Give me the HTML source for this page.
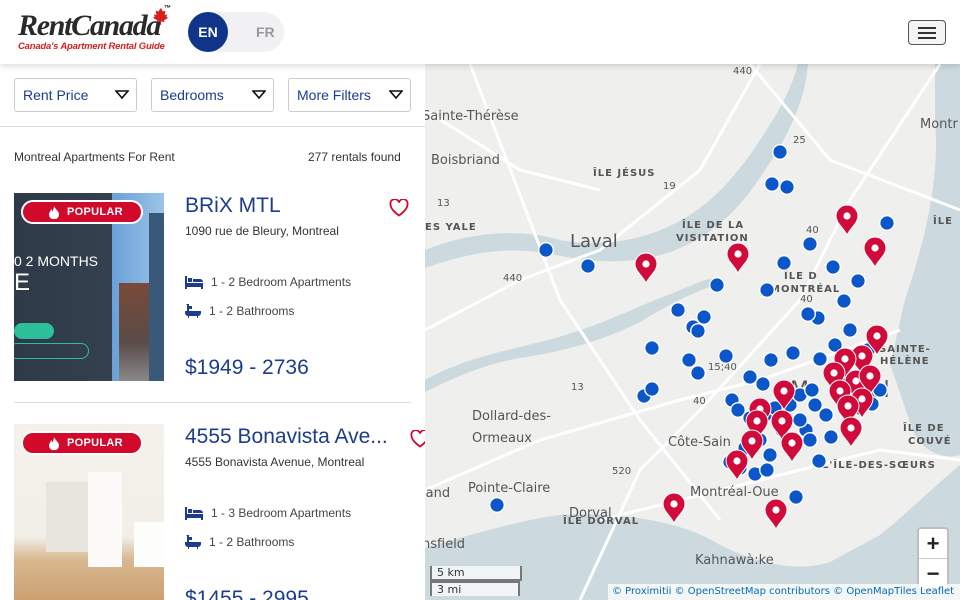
<!DOCTYPE html>
<html><head><meta charset="utf-8">
<style>
*{box-sizing:border-box;margin:0;padding:0}
html,body{width:960px;height:600px;overflow:hidden}
body{background:#fff;font-family:"Liberation Sans",sans-serif;position:relative}
.hdr{position:absolute;left:0;top:0;width:960px;height:64px;background:#fff;box-shadow:0 2px 6px rgba(0,0,0,.15);z-index:5}
.logo{position:absolute;left:18px;top:11px}
.logo .t{font-family:"Liberation Serif",serif;font-style:italic;font-weight:bold;font-size:30px;color:#2a2a2a;letter-spacing:-1.3px;line-height:30px}
.logo .s{font-style:italic;font-weight:bold;font-size:9.5px;color:#d42020;margin-top:0px;letter-spacing:-.2px}
.lang{position:absolute;left:188px;top:12px;width:96px;height:40px;border-radius:20px;background:#f1f1f3}
.lang .en{position:absolute;left:0;top:0;width:40px;height:40px;border-radius:50%;background:#0f3488;color:#fff;font-weight:bold;font-size:14px;text-align:center;line-height:40px}
.lang .fr{position:absolute;left:68px;top:0;line-height:40px;color:#999;font-weight:bold;font-size:14px}
.burger{position:absolute;left:908px;top:20px;width:38px;height:25px;border:1px solid #555;border-radius:4px;background:#f4f4f4}
.burger i{position:absolute;left:9px;width:18px;height:2px;background:#333}
.filt{position:absolute;top:78px;height:34px;border:1px solid #ccc;border-radius:3px;color:#1e3c8c;font-size:14px;line-height:33px;padding-left:8px}
.filt svg{position:absolute;right:7px;top:11px}
.line{position:absolute;left:0;top:126px;width:425px;height:1px;background:#ddd}
.cnt{position:absolute;top:150px;font-size:12px;color:#333}
.card{position:absolute;left:14px;width:411px}
.img{position:absolute;left:0;top:0;width:150px;height:188px;overflow:hidden}
.pop{position:absolute;left:7px;top:7px;width:122px;height:24px;border-radius:12px;background:#d10a2c;border:2px solid #fff;color:#fff;font-size:11px;font-weight:bold;line-height:20px;padding-left:44px;letter-spacing:.3px}
.pop svg{position:absolute;left:26px;top:4px}
.title{position:absolute;left:171px;top:1px;font-size:21px;color:#1e3c8c;white-space:nowrap}
.addr{position:absolute;left:171px;top:31px;font-size:12px;color:#333}
.feat{position:absolute;left:171px;font-size:12px;color:#444}
.feat svg{vertical-align:-3px;margin-right:8px}
.price{position:absolute;left:171px;top:163px;font-size:21px;color:#1e3c8c}
.heart{position:absolute;top:6px}
.map{position:absolute;left:425px;top:64px;width:535px;height:536px;overflow:hidden;background:#efefed}
.map text{font-family:"DejaVu Sans",sans-serif;fill:#555}
.zm{position:absolute;left:917px;top:527px;width:32px;height:64px;border:2px solid rgba(0,0,0,.25);border-radius:4px;background:#fff;z-index:3}
.zm div{height:30px;text-align:center;font-size:22px;font-weight:bold;line-height:30px;color:#222}
.attr{position:absolute;left:608px;top:584px;width:352px;height:16px;background:rgba(255,255,255,.75);font-size:10px;color:#0a6ab0;padding-left:4px;line-height:16px;white-space:nowrap;overflow:hidden;z-index:3;font-family:"DejaVu Sans",sans-serif}
.scale{position:absolute;left:430px;z-index:3;font-size:11px;color:#333;background:rgba(255,255,255,.7);font-family:"DejaVu Sans",sans-serif;padding-left:5px;line-height:13px}
</style></head><body>
<div class="hdr">
 <div class="logo"><div class="t">RentCanada</div><div class="s">Canada's Apartment Rental Guide</div>
 <svg style="position:absolute;left:134px;top:-4px" width="18" height="18" viewBox="0 0 20 20"><path d="M10 1l2 4 3-1-1 5 3-1-1 3 2 1-5 3 1 2-4-1v4h-1v-4l-4 1 1-2-5-3 2-1-1-3 3 1-1-5 3 1z" fill="#d42020"/></svg>
 <span style="position:absolute;left:146px;top:-6px;font-size:7px;font-weight:bold">™</span></div>
 <div class="lang"><div class="en">EN</div><div class="fr">FR</div></div>
 <div class="burger"><i style="top:6px"></i><i style="top:11px"></i><i style="top:16px"></i></div>
</div>
<div class="filt" style="left:14px;width:123px">Rent Price<svg width="14" height="10"><path d="M1 1h12L7 8z" fill="none" stroke="#111" stroke-width="1.6"/></svg></div>
<div class="filt" style="left:151px;width:123px">Bedrooms<svg width="14" height="10"><path d="M1 1h12L7 8z" fill="none" stroke="#111" stroke-width="1.6"/></svg></div>
<div class="filt" style="left:288px;width:123px">More Filters<svg width="14" height="10"><path d="M1 1h12L7 8z" fill="none" stroke="#111" stroke-width="1.6"/></svg></div>
<div class="line"></div>
<div class="cnt" style="left:14px">Montreal Apartments For Rent</div>
<div class="cnt" style="left:308px">277 rentals found</div>

<div class="card" style="top:193px">
 <div class="img" style="background:linear-gradient(90deg,#2e3a48 0,#34404e 98px,#6aa0d8 98px,#9cc4e8 150px)">
  <div style="position:absolute;left:105px;top:90px;width:30px;height:98px;background:linear-gradient(180deg,#7a4a38,#5a4a48 60%,#888 100%)"></div>
  <div style="position:absolute;left:135px;top:20px;width:15px;height:168px;background:#3a5878"></div>
  <div style="position:absolute;left:0;top:60px;color:#fff;font-size:14px;white-space:nowrap">0 2 MONTHS</div>
  <div style="position:absolute;left:0;top:76px;color:#fff;font-size:24px">E</div>
  <div style="position:absolute;left:0;top:130px;width:40px;height:16px;border-radius:8px;background:#2bbf9a"></div>
  <div style="position:absolute;left:-5px;top:150px;width:80px;height:16px;border-radius:8px;border:1px solid #2bbf9a"></div>
  <div class="pop"><svg width="10" height="13" viewBox="0 0 10 13"><path d="M5 0C6 3 10 5 10 8.5A5 5 0 0 1 0 8.5C0 6 2 5 2 3c1 1 1.5 2 1.5 3C4 4 5 2 5 0z" fill="#fff"/></svg>POPULAR</div>
 </div>
 <div class="title">BRiX MTL</div>
 <div class="addr">1090 rue de Bleury, Montreal</div>
 <div class="feat" style="top:82px"><svg width="18" height="13" viewBox="0 0 18 13"><path d="M0 0h2v7h16v6h-2v-2H2v2H0zM3 2h4v4H3zM8 3h7a3 3 0 0 1 3 3H8z" fill="#1e3c8c"/></svg>1 - 2 Bedroom Apartments</div>
 <div class="feat" style="top:111px"><svg width="16" height="14" viewBox="0 0 16 14"><path d="M1 0h3v2h3v3H4V7h12v2a3 3 0 0 1-3 3v2h-1v-2H4v2H3v-2A3 3 0 0 1 0 9V7h2V1z" fill="#1e3c8c"/></svg>1 - 2 Bathrooms</div>
 <div class="price">$1949 - 2736</div>
 <svg class="heart" style="left:375px" width="20" height="18" viewBox="0 0 20 18"><path d="M10 16.5S1.5 11 1.5 5.5A4 4 0 0 1 10 3.5a4 4 0 0 1 8.5 2C18.5 11 10 16.5 10 16.5z" fill="none" stroke="#d10a2c" stroke-width="1.8"/></svg>
</div>
<div style="position:absolute;left:14px;top:402px;width:397px;height:1px;background:#ddd"></div>
<div class="card" style="top:424px">
 <div class="img" style="background:linear-gradient(180deg,#f4f0ea 0,#f2eee8 60%,#d8b890 72%,#c89a68 100%)">
  <div style="position:absolute;left:32px;top:58px;width:42px;height:70px;background:#e8e4de"></div>
  <div style="position:absolute;left:74px;top:48px;width:34px;height:95px;background:#fbfaf8"></div>
  <div style="position:absolute;left:120px;top:98px;width:30px;height:45px;background:#fdfdfc"></div>
  <div class="pop"><svg width="10" height="13" viewBox="0 0 10 13"><path d="M5 0C6 3 10 5 10 8.5A5 5 0 0 1 0 8.5C0 6 2 5 2 3c1 1 1.5 2 1.5 3C4 4 5 2 5 0z" fill="#fff"/></svg>POPULAR</div>
 </div>
 <div class="title">4555 Bonavista Ave...</div>
 <div class="addr">4555 Bonavista Avenue, Montreal</div>
 <div class="feat" style="top:82px"><svg width="18" height="13" viewBox="0 0 18 13"><path d="M0 0h2v7h16v6h-2v-2H2v2H0zM3 2h4v4H3zM8 3h7a3 3 0 0 1 3 3H8z" fill="#1e3c8c"/></svg>1 - 3 Bedroom Apartments</div>
 <div class="feat" style="top:111px"><svg width="16" height="14" viewBox="0 0 16 14"><path d="M1 0h3v2h3v3H4V7h12v2a3 3 0 0 1-3 3v2h-1v-2H4v2H3v-2A3 3 0 0 1 0 9V7h2V1z" fill="#1e3c8c"/></svg>1 - 2 Bathrooms</div>
 <div class="price">$1455 - 2995</div>
 <svg class="heart" style="left:396px" width="20" height="18" viewBox="0 0 20 18"><path d="M10 16.5S1.5 11 1.5 5.5A4 4 0 0 1 10 3.5a4 4 0 0 1 8.5 2C18.5 11 10 16.5 10 16.5z" fill="none" stroke="#d10a2c" stroke-width="1.8"/></svg>
</div>

<div class="map">
<svg width="535" height="536" viewBox="425 64 535 536">
<defs>
 <g id="b"><circle r="8" fill="#fff"/><circle r="6.6" fill="#0b56c8"/></g>
 <g id="p"><path d="M0 0C-4-8-11-12-11-19a11 11 0 0 1 22 0C11-12 4-8 0 0z" fill="#d00a3a" stroke="#fff" stroke-width="1"/><circle cy="-19" r="3.6" fill="#fff"/></g>
</defs>
<!-- water -->
<path d="M425 600L425 548C470 535 520 520 560 515C620 512 680 520 720 545C760 565 800 572 830 562L880 535C905 515 930 490 960 465L960 600Z" fill="#ccdadf"/>
<path d="M935 64L960 64L960 455C945 460 925 452 915 435C905 410 898 385 890 365L905 300C925 240 940 180 935 120Z" fill="#ccdadf"/>
<path d="M425 250C470 232 520 228 560 240C600 248 640 240 670 226C700 212 725 190 752 152C772 122 790 95 798 64L808 64C805 105 785 140 765 170C740 210 710 238 670 252C630 266 590 262 550 254C510 246 470 252 425 268Z" fill="#ccdadf"/>
<path d="M425 380C460 360 500 352 540 342C590 330 630 310 660 298C690 287 700 280 715 278L712 286C690 294 670 304 640 322C600 342 560 352 520 358C480 365 450 380 425 392Z" fill="#ccdadf"/>
<!-- roads -->
<g stroke="#fff" stroke-width="3" fill="none">
<path d="M425 330L520 280L600 250L700 170L760 64"/>
<path d="M470 64L560 300L640 420L720 520"/>
<path d="M425 490L540 440L680 400L760 380L900 330"/>
<path d="M580 600L640 470L700 410L800 300L850 200L940 64"/>
<path d="M750 64L830 160L960 210"/>
<path d="M425 110L520 170L600 190"/>
<path d="M600 520L760 480L880 450L960 460"/>
</g>
<!-- labels -->
<g font-size="13">
<text x="422" y="120">Sainte-Thérèse</text>
<text x="431" y="164">Boisbriand</text>
<text x="570" y="247" font-size="18">Laval</text>
<text x="472" y="420">Dollard-des-</text>
<text x="472" y="442">Ormeaux</text>
<text x="468" y="492">Pointe-Claire</text>
<text x="422" y="497">land</text>
<text x="569" y="517">Dorval</text>
<text x="422" y="548">nsfield</text>
<text x="668" y="446">Côte-Sain</text>
<text x="690" y="496">Montréal-Oue</text>
<text x="695" y="564">Kahnawà:ke</text>
<text x="920" y="128">Montr</text>
<text x="790" y="397" font-size="22">M</text><text x="870" y="397" font-size="22">al</text>
</g>
<g font-size="10" font-weight="bold" letter-spacing="1">
<text x="593" y="176">ÎLE JÉSUS</text>
<text x="682" y="228">ÎLE DE LA</text>
<text x="676" y="241">VISITATION</text>
<text x="784" y="279">ÎLE D</text>
<text x="770" y="292">MONTRÉAL</text>
<text x="425" y="230">ES YALE</text>
<text x="563" y="524">ÎLE DORVAL</text>
<text x="822" y="468">L'ÎLE-DES-SŒURS</text>
<text x="879" y="352">SAINTE-</text><text x="880" y="364">HÉLÈNE</text>
<text x="903" y="431">ÎLE DE</text><text x="908" y="444">COUVÉ</text>
<text x="933" y="224">ÎLE</text>
</g>
<g font-size="10"><text x="733" y="74">440</text><text x="793" y="143">25</text><text x="663" y="189">19</text><text x="503" y="281">440</text><text x="437" y="206">13</text><text x="571" y="390">13</text><text x="612" y="474">520</text><text x="693" y="404">40</text><text x="708" y="370">15;40</text><text x="806" y="233">40</text><text x="800" y="302">40</text></g>
<g>
<use href="#b" x="780" y="152"/><use href="#b" x="772" y="184"/><use href="#b" x="787" y="187"/><use href="#b" x="546" y="250"/><use href="#b" x="588" y="266"/><use href="#b" x="810" y="244"/><use href="#b" x="887" y="223"/><use href="#b" x="833" y="267"/><use href="#b" x="784" y="263"/><use href="#b" x="717" y="285"/><use href="#b" x="767" y="290"/><use href="#b" x="858" y="281"/><use href="#b" x="844" y="301"/><use href="#b" x="678" y="310"/><use href="#b" x="704" y="317"/><use href="#b" x="693" y="327"/><use href="#b" x="698" y="331"/><use href="#b" x="818" y="318"/><use href="#b" x="808" y="314"/><use href="#b" x="652" y="348"/><use href="#b" x="689" y="360"/><use href="#b" x="698" y="373"/><use href="#b" x="726" y="356"/><use href="#b" x="644" y="396"/><use href="#b" x="652" y="389"/><use href="#b" x="771" y="360"/><use href="#b" x="750" y="377"/><use href="#b" x="763" y="384"/><use href="#b" x="793" y="353"/><use href="#b" x="820" y="359"/><use href="#b" x="497" y="505"/><use href="#b" x="796" y="497"/><use href="#b" x="819" y="461"/><use href="#b" x="831" y="437"/><use href="#b" x="806" y="430"/><use href="#b" x="740" y="468"/><use href="#b" x="755" y="474"/><use href="#b" x="767" y="470"/><use href="#b" x="732" y="400"/><use href="#b" x="738" y="410"/><use href="#b" x="750" y="418"/><use href="#b" x="765" y="415"/><use href="#b" x="775" y="408"/><use href="#b" x="790" y="405"/><use href="#b" x="800" y="395"/><use href="#b" x="812" y="390"/><use href="#b" x="826" y="415"/><use href="#b" x="845" y="400"/><use href="#b" x="860" y="408"/><use href="#b" x="872" y="404"/><use href="#b" x="850" y="330"/><use href="#b" x="835" y="345"/><use href="#b" x="868" y="350"/><use href="#b" x="880" y="340"/><use href="#b" x="810" y="440"/><use href="#b" x="782" y="430"/><use href="#b" x="760" y="440"/><use href="#b" x="745" y="448"/><use href="#b" x="730" y="462"/><use href="#b" x="770" y="455"/><use href="#b" x="800" y="420"/><use href="#b" x="815" y="405"/><use href="#b" x="838" y="380"/><use href="#b" x="862" y="375"/><use href="#b" x="880" y="390"/>
</g>
<g>
<use href="#p" x="646" y="283"/><use href="#p" x="738" y="273"/><use href="#p" x="847" y="235"/><use href="#p" x="875" y="267"/><use href="#p" x="877" y="355"/><use href="#p" x="862" y="375"/><use href="#p" x="845" y="378"/><use href="#p" x="834" y="392"/><use href="#p" x="856" y="400"/><use href="#p" x="870" y="395"/><use href="#p" x="840" y="410"/><use href="#p" x="862" y="418"/><use href="#p" x="848" y="425"/><use href="#p" x="784" y="410"/><use href="#p" x="760" y="428"/><use href="#p" x="757" y="440"/><use href="#p" x="782" y="440"/><use href="#p" x="752" y="460"/><use href="#p" x="737" y="480"/><use href="#p" x="792" y="462"/><use href="#p" x="851" y="447"/><use href="#p" x="674" y="523"/><use href="#p" x="776" y="529"/>
</g>
</svg>
</div>
<div class="zm"><div style="border-bottom:1px solid #ccc">+</div><div>−</div></div>
<div class="scale" style="top:566px;width:92px;border:2px solid #777;border-top:none">5 km</div>
<div class="scale" style="top:581px;width:90px;border:2px solid #777;border-bottom:none">3 mi</div>
<div class="attr">© Proximitii © OpenStreetMap contributors © OpenMapTiles Leaflet</div>
</body></html>
